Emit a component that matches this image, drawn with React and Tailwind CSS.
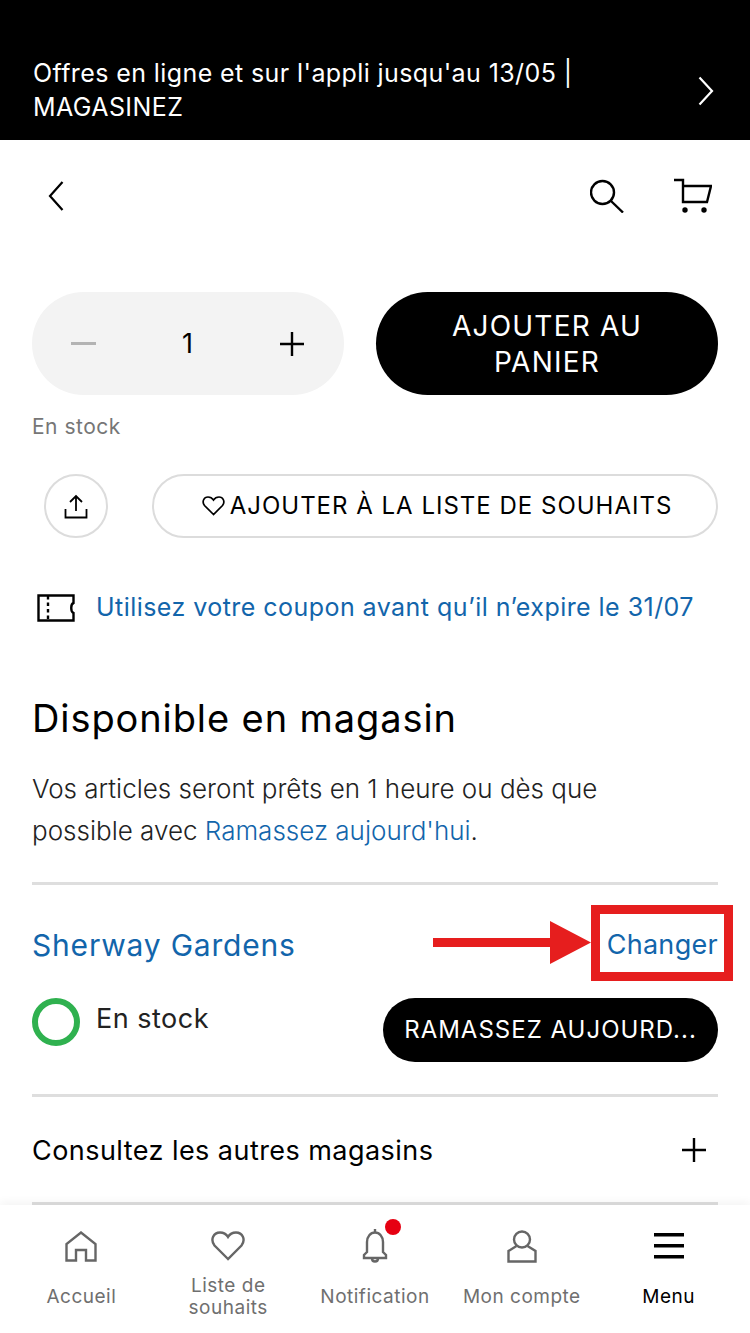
import React from "react";

const Divider = () => <div className="h-[3px] bg-[#dedede]" />;

const NavItem = ({ label, icon, active, children }) => (
  <div className="flex-1 flex flex-col items-center relative">
    <div className="h-[40px] mt-[21px] flex items-center justify-center">{icon}</div>
    <div
      className={`h-[60px] mt-[1px] flex items-center justify-center text-center text-[19px] leading-[22px] tracking-[0.5px] ${
        active ? "text-black" : "text-[#6f6f6f]"
      }`}
    >
      {label}
    </div>
    {children}
  </div>
);

const App = () => {
  return (
    <div className="w-[750px] h-[1333px] overflow-hidden bg-white flex flex-col font-['Inter',sans-serif] relative">
      {/* Promo banner */}
      <div className="h-[140px] shrink-0 bg-black text-white pt-[56px] pl-[33px] pr-[36px] flex items-start justify-between">
        <p className="text-[25px] leading-[34px] tracking-[0.4px] w-[600px]">
          Offres en ligne et sur l'appli jusqu'au 13/05 | MAGASINEZ
        </p>
        <svg width="16" height="30" viewBox="0 0 16 30" fill="none" stroke="white" strokeWidth="2.2" className="mt-[20px]">
          <path d="M1.5 1.5 14 15 1.5 28.5" />
        </svg>
      </div>

      {/* Top bar */}
      <div className="h-[112px] shrink-0 flex items-center justify-between pl-[48px] pr-[38px]">
        <svg width="16" height="30" viewBox="0 0 16 30" fill="none" stroke="black" strokeWidth="2.2">
          <path d="M14.5 1 2 15l12.5 14" />
        </svg>
        <div className="flex items-center gap-[50px]">
          <svg width="34" height="34" viewBox="0 0 34 34" fill="none" stroke="black" strokeWidth="2.4">
            <circle cx="12.5" cy="13.5" r="11.500" />
            <path d="M21 22l12 11.500" />
          </svg>
          <svg width="38" height="36" viewBox="0 0 38 36" fill="none" stroke="black" strokeWidth="2.4">
            <path d="M0 2h9v22h24l4-16H9" />
            <circle cx="11" cy="32" r="2.700" fill="black" stroke="none" />
            <circle cx="30" cy="32" r="2.700" fill="black" stroke="none" />
          </svg>
        </div>
      </div>

      {/* Main content */}
      <div className="flex-1 min-h-0 overflow-hidden px-[32px] pt-[40px]">
        <div className="flex gap-[32px]">
          <div className="w-[312px] h-[103px] rounded-full bg-[#f3f3f3] flex items-center justify-between px-[39px]">
            <span className="block w-[25px] h-[3px] bg-[#b3b3b3]" />
            <span className="mt-[2px] text-[27px] text-black">1</span>
            <svg width="26" height="26" viewBox="0 0 26 26" stroke="black" strokeWidth="2.4">
              <path d="M13 1v24M1 13h24" />
            </svg>
          </div>
          <div className="w-[342px] h-[103px] rounded-full bg-black text-white flex items-center justify-center text-center text-[28px] leading-[36px] tracking-[1.2px] px-[50px]">
            AJOUTER AU PANIER
          </div>
        </div>

        <p className="mt-[18px] text-[21px] leading-[28px] tracking-[0.5px] text-[#767676]">En stock</p>

        <div className="mt-[33px] flex items-center">
          <div className="ml-[12px] w-[64px] h-[64px] rounded-full border-2 border-[#dcdcdc] flex items-center justify-center">
            <svg width="24" height="25" viewBox="0 0 24 25" fill="none" stroke="black" strokeWidth="1.8">
              <path d="M12 17V2M6 8l6-6 6 6M1.5 15v8.5h21V15" />
            </svg>
          </div>
          <div className="ml-[44px] flex-1 h-[64px] pl-[4px] rounded-full border-2 border-[#dcdcdc] flex items-center justify-center gap-[5px] text-[24px] tracking-[1px] text-black">
            <svg width="23" height="20" viewBox="0 0 23 20" fill="none" stroke="black" strokeWidth="1.7">
              <path d="M11.5 18.5 2.5 9.5C-.5 5.5 2 1 6 1c2.5 0 4.200 1 5.500 3C12.800 2 14.500 1 17 1c4 0 6.500 4.500 3.500 8.500z" />
            </svg>
            <span>AJOUTER À LA LISTE DE SOUHAITS</span>
          </div>
        </div>

        <div className="mt-[42px] flex items-center h-[56px]">
          <svg width="38" height="28" viewBox="0 0 38 28" fill="none" stroke="black" strokeWidth="2.400" className="ml-[5px]">
            <path d="M1.500 1.500h35v7.500c-3 1-3 9 0 10v7.500h-35z" />
            <path d="M11 2v24" strokeDasharray="3.500 3" />
          </svg>
          <a className="ml-[21px] text-[25px] tracking-[0.45px] text-[#1265ab]">Utilisez votre coupon avant qu’il n’expire le 31/07</a>
        </div>

        <h2 className="mt-[59px] text-[38px] leading-[46px] tracking-[0.9px] text-black">Disponible en magasin</h2>

        <p className="mt-[27px] text-[26px] leading-[42px] text-[#222] font-light">
          Vos articles seront prêts en 1 heure ou dès que
          <br />
          possible avec <a className="text-[#1265ab]">Ramassez aujourd'hui</a>.
        </p>

        <div className="mt-[30px]"><Divider /></div>

        <div className="mt-[41px] flex items-center justify-between h-[38px]">
          <a className="text-[30px] tracking-[0.8px] text-[#1265ab]">Sherway Gardens</a>
          <a className="text-[27px] tracking-[0.3px] text-[#1265ab]">Changer</a>
        </div>

        <div className="mt-[34px] flex justify-between">
          <div className="flex items-center h-[48px]">
            <span className="w-[48px] h-[48px] rounded-full border-[6px] border-[#2fb14f]" />
            <span className="ml-[16px] text-[27px] tracking-[0.5px] text-[#222] -mt-[6px]">En stock</span>
          </div>
          <div className="w-[335px] h-[64px] rounded-full bg-black text-white flex items-center justify-center text-[24px] tracking-[1px]">
            RAMASSEZ AUJOURD...
          </div>
        </div>

        <div className="mt-[32px]"><Divider /></div>

        <div className="h-[105px] flex items-center justify-between">
          <span className="mt-[3px] text-[27px] tracking-[0.45px] text-black">Consultez les autres magasins</span>
          <svg width="26" height="26" viewBox="0 0 26 26" stroke="black" strokeWidth="2.400" className="mr-[11px]">
            <path d="M13 1v24M1 13h24" />
          </svg>
        </div>

        <Divider />
      </div>

      {/* Bottom nav */}
      <div className="h-[128px] shrink-0 bg-white flex px-[8px] shadow-[0_-4px_8px_rgba(0,0,0,0.04)] relative">
        <NavItem
          label="Accueil"
          icon={
            <svg width="32" height="31" viewBox="0 0 32 31" fill="none" stroke="#666" strokeWidth="2.400">
              <path d="M1.500 29.500V13L16 1.500 30.500 13v16.500H21V19H11v10.500z" />
            </svg>
          }
        />
        <NavItem
          label={<span>Liste de<br />souhaits</span>}
          icon={
            <svg width="34" height="30" viewBox="0 0 34 30" fill="none" stroke="#666" strokeWidth="2.400">
              <path d="M17 28 3.500 14.500C-1 8.500 2.500 1.500 9 1.500c3.500 0 6.200 1.500 8 4.500 1.800-3 4.500-4.500 8-4.500 6.500 0 10 7 5.500 13z" />
            </svg>
          }
        />
        <NavItem
          label="Notification"
          icon={
            <svg width="26" height="34" viewBox="0 0 26 34" fill="none" stroke="#666" strokeWidth="2.400">
              <path d="M13 0v3.500M2 29v-3l3-3V13c0-5.500 3.500-9.500 8-9.500s8 4 8 9.500v10l3 3v3zM10 29.500c0 4 6 4 6 0" />
            </svg>
          }
        >
          <span className="absolute left-[83px] top-[14px] w-[16px] h-[16px] rounded-full bg-[#e60012]" />
        </NavItem>
        <NavItem
          label="Mon compte"
          icon={
            <svg width="30" height="33" viewBox="0 0 30 33" fill="none" stroke="#666" strokeWidth="2.400">
              <circle cx="15" cy="9.500" r="8" />
              <path d="M9.500 16 1.500 21v10.500h27V21l-8-5" />
            </svg>
          }
        />
        <NavItem
          label="Menu"
          active
          icon={
            <svg width="30" height="26" viewBox="0 0 30 26" fill="black">
              <rect y="0" width="30" height="3.500" />
              <rect y="11" width="30" height="3.500" />
              <rect y="22" width="30" height="3.500" />
            </svg>
          }
        />
      </div>

      {/* Red annotation over the page */}
      <div className="absolute left-[591px] top-[905px] w-[142px] h-[76px] border-[9px] border-[#e61e1e]" />
      <svg className="absolute left-[433px] top-[921px]" width="160" height="43" viewBox="0 0 160 43" fill="#e61e1e">
        <path d="M0 17h117V0l41 21.500-41 21.500V26H0z" />
      </svg>
    </div>
  );
};

export default App;
